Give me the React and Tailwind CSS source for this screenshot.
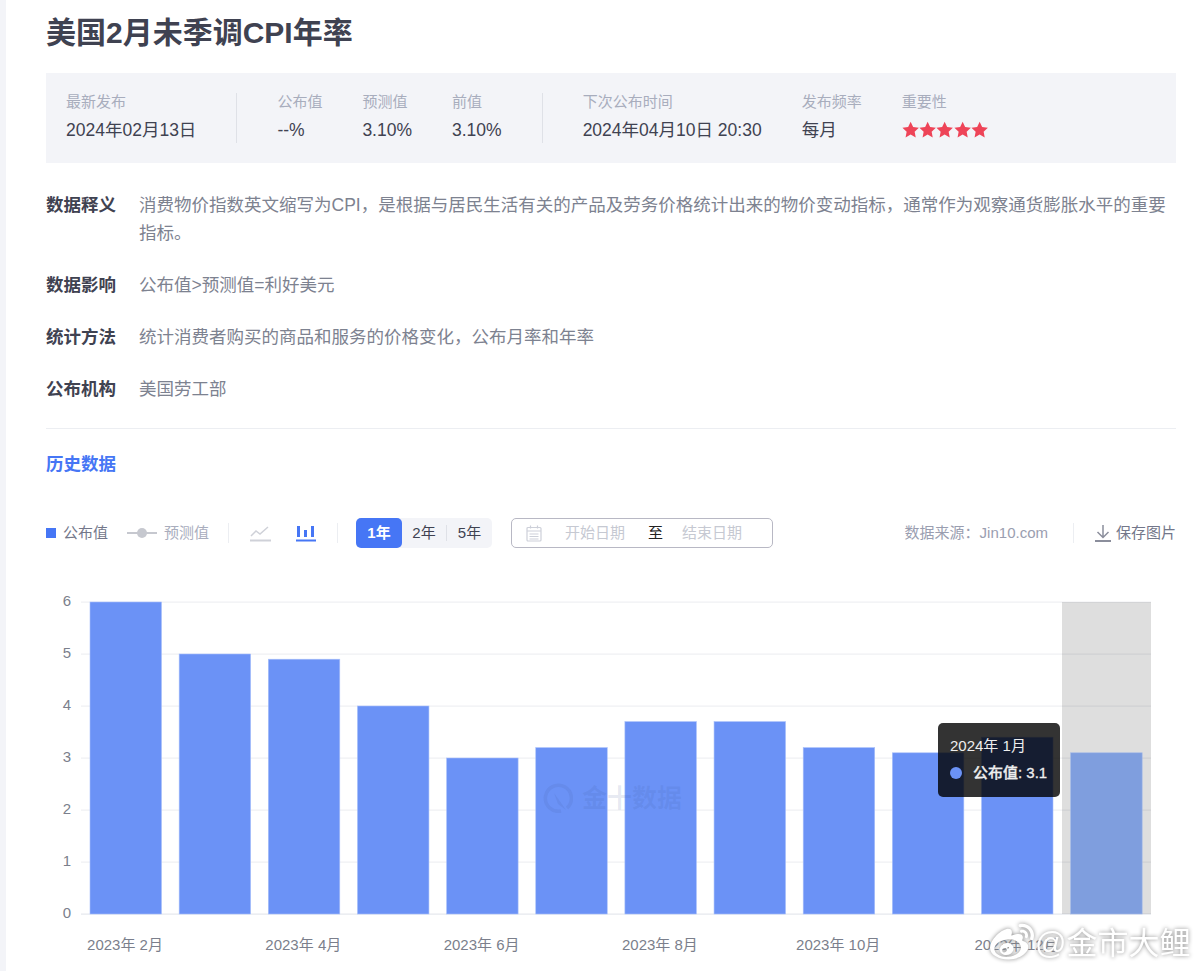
import React from "react";
import { FaWeibo } from "react-icons/fa";

const font = "font-['Liberation_Sans','Noto_Sans_CJK_SC',sans-serif]";

const bars = [6, 5, 4.9, 4, 3, 3.2, 3.7, 3.7, 3.2, 3.1, 3.4, 3.1];
const xLabels = ["2023年 2月", "", "2023年 4月", "", "2023年 6月", "", "2023年 8月", "", "2023年 10月", "", "2023年 12月", ""];

const details = [
  ["数据释义", "消费物价指数英文缩写为CPI，是根据与居民生活有关的产品及劳务价格统计出来的物价变动指标，通常作为观察通货膨胀水平的重要指标。"],
  ["数据影响", "公布值>预测值=利好美元"],
  ["统计方法", "统计消费者购买的商品和服务的价格变化，公布月率和年率"],
  ["公布机构", "美国劳工部"],
];

const Stat = ({ label, children }) => (
  <div className="-mt-px flex flex-col gap-[7px]">
    <span className="text-[15px] leading-[19px] text-[#a8adbd] whitespace-nowrap">{label}</span>
    <div className="text-[17.5px] leading-[25px] text-[#3f4251] whitespace-nowrap">{children}</div>
  </div>
);

const Star = () => (
  <svg width="17.3" height="17.3" viewBox="0.5 0 16 16">
    <path d="M8.5 0.6l2.3 4.9 5.3.7-3.9 3.7 1 5.3-4.7-2.6-4.7 2.6 1-5.3L.9 6.2l5.3-.7z" fill="#ee4458" />
  </svg>
);

const Chart = () => {
  // chart box starts at x=46, y=590 on the page
  const top = 12;
  const unit = 52;
  const base = top + unit * 6;
  return (
    <svg width="1130" height="381" viewBox="0 0 1130 381" className="block">
      {[0, 1, 2, 3, 4, 5, 6].map((v) => (
        <g key={v}>
          <line x1="35" x2="1105" y1={base - v * unit} y2={base - v * unit} stroke={v === 0 ? "#e6e8ee" : "#eff0f3"} strokeWidth="1.25" />
          <text x="25" y={base - v * unit + 4} textAnchor="end" fontSize="15" fill="#7b7f8c">{v}</text>
        </g>
      ))}
      <rect x="1016" y={top} width="89" height={unit * 6} fill="#000" fillOpacity="0.13" />
      {bars.map((v, i) => (
        <rect
          key={i}
          x={44 + i * 89.15}
          y={base - v * unit}
          width="71.5"
          height={v * unit}
          fill={i === 11 ? "#7f9ede" : "#6b92f6"}
          stroke={i === 11 ? "#a3b9e8" : "#a9c0fa"}
          strokeWidth="0.6"
        />
      ))}
      {xLabels.map((t, i) =>
        t ? (
          <text key={i} x={79 + i * 89.15} y="360" textAnchor="middle" fontSize="15" fill="#7b7f8c">{t}</text>
        ) : null
      )}
    </svg>
  );
};

export default function App() {
  return (
    <div className={`flex h-[971px] w-full overflow-hidden bg-white ${font}`}>
      <div className="w-[6px] shrink-0 bg-[#f3f4f8]" />
      <div className="w-[1130px] ml-[40px] shrink-0">
        <h1 className="h-[73px] pt-[15px] text-[30px] leading-[36px] font-bold text-[#3f4251]">美国2月未季调CPI年率</h1>

        <div className="flex h-[90px] gap-[40px] bg-[#f3f4f8] px-[20px] py-[20px]">
          <Stat label="最新发布">2024年02月13日</Stat>
          <div className="w-px bg-[#dfe1e7]" />
          <Stat label="公布值">--%</Stat>
          <Stat label="预测值">3.10%</Stat>
          <Stat label="前值">3.10%</Stat>
          <div className="w-px bg-[#dfe1e7]" />
          <Stat label="下次公布时间">2024年04月10日 20:30</Stat>
          <Stat label="发布频率">每月</Stat>
          <Stat label="重要性">
            <div className="flex h-[25px] items-center pb-[2px]">
              <Star /><Star /><Star /><Star /><Star />
            </div>
          </Stat>
        </div>

        <div className="mt-[28px] flex flex-col gap-[24px]">
          {details.map(([k, v]) => (
            <div key={k} className="flex gap-[23px] text-[17.5px] leading-[28px]">
              <span className="w-[70px] shrink-0 font-bold text-[#3f4251]">{k}</span>
              <p className="text-[#7d8290]">{v}</p>
            </div>
          ))}
        </div>

        <div className="mt-[25px] h-px bg-[#eceef2]" />

        <div className="mt-[21px] text-[17.5px] leading-[28px] font-bold text-[#4676f5]">历史数据</div>

        <div className="mt-[40px] flex h-[30px] items-center text-[15px]">
          <span className="h-[10px] w-[10px] bg-[#4676f5]" />
          <span className="ml-[7px] text-[#73778a]">公布值</span>
          <svg width="30" height="12" viewBox="0 0 30 12" className="ml-[19px]">
            <line x1="0" x2="30" y1="6" y2="6" stroke="#c6c8cf" strokeWidth="2" />
            <circle cx="15" cy="6" r="5" fill="#c6c8cf" />
          </svg>
          <span className="ml-[7px] text-[#a9adbd]">预测值</span>
          <div className="ml-[19px] h-[20px] w-px bg-[#eceef2]" />
          <svg width="21" height="18" viewBox="0 0 21 18" className="ml-[21px]" fill="none" stroke="#cfd1d8" strokeWidth="1.5">
            <path d="M1 12l5-5 4 3 8-7" />
            <path d="M0 16.5h21" strokeWidth="2" />
          </svg>
          <svg width="20" height="18" viewBox="0 0 20 18" className="ml-[25px]" fill="#4676f5">
            <rect x="1" y="2" width="3" height="11" />
            <rect x="8" y="6" width="3" height="7" />
            <rect x="15" y="2" width="3" height="11" />
            <rect x="0" y="15.5" width="20" height="2" />
          </svg>
          <div className="ml-[21px] h-[20px] w-px bg-[#eceef2]" />
          <div className="ml-[18px] flex h-[30px] w-[136px] items-center rounded-[5px] bg-[#f3f4f8] text-[#3f4251]">
            <span className="flex h-full w-[46px] items-center justify-center rounded-[5px] bg-[#4676f5] font-bold text-white">1年</span>
            <span className="w-[44px] text-center">2年</span>
            <span className="h-[16px] w-px bg-[#dfe1e7]" />
            <span className="flex-1 text-center">5年</span>
          </div>
          <div className="ml-[19px] flex h-[30px] w-[262px] items-center rounded-[5px] border border-[#b8b8c4] pl-[14px] text-[#c6c9d2]">
            <svg width="16" height="17" viewBox="0 0 16 17" fill="none" stroke="#cdd0d9" strokeWidth="1.2">
              <rect x="1" y="2.5" width="14" height="13.5" rx="1" />
              <path d="M1 6h14M4.5 0.5v3M11.5 0.5v3M3.5 9h9M3.5 11.5h9M3.5 14h9" />
            </svg>
            <span className="ml-[23px]">开始日期</span>
            <span className="ml-[23px] text-[#222]">至</span>
            <span className="ml-[19px]">结束日期</span>
          </div>
          <span className="ml-auto text-[#9a9eb0]">数据来源：Jin10.com</span>
          <div className="ml-[25px] h-[20px] w-px bg-[#eceef2]" />
          <svg width="16" height="18" viewBox="0 0 16 18" className="ml-[21px]" fill="none" stroke="#8b8e9c" strokeWidth="1.5">
            <path d="M8 1v12M2.5 8L8 13.5 13.5 8" />
            <path d="M0 17h16" strokeWidth="2" />
          </svg>
          <span className="ml-[5px] text-[#73778a]">保存图片</span>
        </div>

        <div className="relative mt-[42px]">
          <Chart />

          {/* faint brand mark behind the bars */}
          <div className="absolute left-[497px] top-[193px] flex items-center gap-[9px] text-[#3f5a9e]/12">
            <svg width="30" height="30" viewBox="0 0 30 30" fill="none" stroke="currentColor" strokeWidth="3.5">
              <path d="M24 25a13 13 0 1 0-6 3" />
              <path d="M11 10l12 17-8-6z" fill="currentColor" stroke="none" />
            </svg>
            <span className="text-[25px] leading-[30px] font-bold">金十数据</span>
          </div>

          {/* hover tooltip */}
          <div className="absolute left-[892px] top-[133px] h-[74px] w-[122px] rounded-[5px] bg-black/80 px-[12px] pt-[12px] text-[15px] leading-[22px] text-[#eeeeee]">
            <div>2024年 1月</div>
            <div className="mt-[5px] flex items-center whitespace-nowrap">
              <span className="h-[12px] w-[12px] rounded-full bg-[#6b92f6]" />
              <span className="ml-[11px] font-medium [-webkit-text-stroke:0.3px_#eeeeee]">公布值: 3.1</span>
            </div>
          </div>

          {/* weibo watermark */}
          <div className="absolute left-[944px] top-[332px] flex items-center text-white [filter:drop-shadow(0_0_2px_#888)]">
            <FaWeibo className="-my-[3px] h-[44px] w-[44px]" />
            <span className="ml-[1px] mt-[3px] whitespace-nowrap text-[31px] leading-[38px]">@金市大鲤</span>
          </div>
        </div>
      </div>
    </div>
  );
}
